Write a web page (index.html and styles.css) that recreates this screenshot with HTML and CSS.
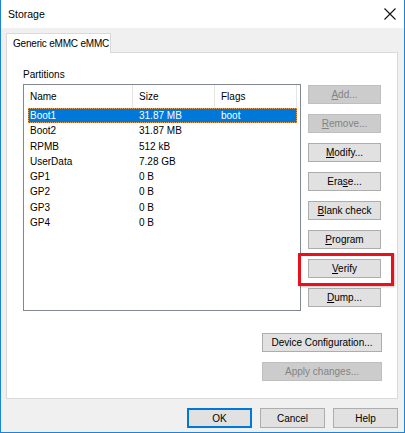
FILE: index.html
```html
<!DOCTYPE html>
<html lang="en">
<head>
    <meta charset="UTF-8">
    <title>Storage</title>
    <link rel="stylesheet" href="styles.css">
</head>
<body>
    <div class="window">
        <div class="titlebar">
            <span class="title">Storage</span>
            <svg class="close" width="12" height="12" viewBox="0 0 12 12">
                <path d="M0.5 0.5 L11.5 11.5 M11.5 0.5 L0.5 11.5" stroke="#111" stroke-width="1.1" fill="none"/>
            </svg>
        </div>

        <div class="content">
            <div class="tabs">
                <div class="tab">Generic eMMC eMMC</div>
            </div>

            <div class="panel">
                <div class="label">Partitions</div>
                <div class="main-row">
                    <div class="list">
                        <div class="list-header">
                            <div class="col col-name">Name</div>
                            <div class="col col-size">Size</div>
                            <div class="col col-flags">Flags</div>
                        </div>
                        <div class="row selected">
                            <div class="col col-name">Boot1</div>
                            <div class="col col-size">31.87 MB</div>
                            <div class="col col-flags">boot</div>
                        </div>
                        <div class="row">
                            <div class="col col-name">Boot2</div>
                            <div class="col col-size">31.87 MB</div>
                            <div class="col col-flags"></div>
                        </div>
                        <div class="row">
                            <div class="col col-name">RPMB</div>
                            <div class="col col-size">512 kB</div>
                            <div class="col col-flags"></div>
                        </div>
                        <div class="row">
                            <div class="col col-name">UserData</div>
                            <div class="col col-size">7.28 GB</div>
                            <div class="col col-flags"></div>
                        </div>
                        <div class="row">
                            <div class="col col-name">GP1</div>
                            <div class="col col-size">0 B</div>
                            <div class="col col-flags"></div>
                        </div>
                        <div class="row">
                            <div class="col col-name">GP2</div>
                            <div class="col col-size">0 B</div>
                            <div class="col col-flags"></div>
                        </div>
                        <div class="row">
                            <div class="col col-name">GP3</div>
                            <div class="col col-size">0 B</div>
                            <div class="col col-flags"></div>
                        </div>
                        <div class="row">
                            <div class="col col-name">GP4</div>
                            <div class="col col-size">0 B</div>
                            <div class="col col-flags"></div>
                        </div>
                    </div>

                    <div class="side-buttons">
                        <button class="btn disabled"><u>A</u>dd...</button>
                        <button class="btn disabled"><u>R</u>emove...</button>
                        <button class="btn"><u>M</u>odify...</button>
                        <button class="btn">Era<u>s</u>e...</button>
                        <button class="btn"><u>B</u>lank check</button>
                        <button class="btn"><u>P</u>rogram</button>
                        <div class="highlight-wrap">
                            <button class="btn"><u>V</u>erify</button>
                            <div class="highlight"></div>
                        </div>
                        <button class="btn"><u>D</u>ump...</button>
                    </div>
                </div>

                <div class="config-buttons">
                    <button class="btn wide">Device Configuration...</button>
                    <button class="btn wide disabled">Apply changes...</button>
                </div>
            </div>

            <div class="footer">
                <button class="btn dialog default">OK</button>
                <button class="btn dialog">Cancel</button>
                <button class="btn dialog">Help</button>
            </div>
        </div>
    </div>
</body>
</html>
```

FILE: styles.css
```css
body {
    margin: 0;
    font-family: 'Liberation Sans', Arial, sans-serif;
    font-size: 10px;
    color: #000;
    background-color: #fff;
}
.window {
    box-sizing: border-box;
    width: 405px;
    height: 433px;
    border: 1px solid #1c84d8;
    border-top: none;
    display: flex;
    flex-direction: column;
}
.titlebar {
    height: 28px;
    background-color: #fff;
    display: flex;
    align-items: center;
    justify-content: space-between;
    padding: 0 8px 0 7px;
    flex-shrink: 0;
}
.title {
    font-size: 10.5px;
}
.content {
    flex: 1;
    background-color: #f0f0f0;
    padding: 5px 6px 0 5px;
    display: flex;
    flex-direction: column;
}
.tabs {
    display: flex;
    height: 19px;
}
.tab {
    box-sizing: border-box;
    width: 105px;
    height: 20px;
    padding: 4px 0 0 6px;
    background-color: #fff;
    border: 1px solid #d9d9d9;
    border-bottom: none;
    white-space: nowrap;
    letter-spacing: -0.2px;
    position: relative;
    z-index: 1;
}
.panel {
    box-sizing: border-box;
    height: 347px;
    background-color: #fff;
    border: 1px solid #d9d9d9;
    padding: 16px 15px 0 16px;
}
.label {
    height: 14px;
    margin-bottom: 1px;
}
.main-row {
    display: flex;
    gap: 7px;
}
.list {
    box-sizing: border-box;
    width: 278px;
    height: 227px;
    border: 1px solid #828790;
    padding-right: 3px;
}
.list-header {
    display: flex;
    height: 23px;
    align-items: center;
}
.list-header .col {
    height: 23px;
    line-height: 23px;
    border-right: 1px solid #e5e5e5;
}
.col {
    box-sizing: border-box;
    padding-left: 6px;
    white-space: nowrap;
}
.col-name {
    width: 109px;
}
.col-size {
    width: 82px;
}
.col-flags {
    width: 82px;
}
.row {
    display: flex;
    height: 15.3px;
    line-height: 15.3px;
    margin-left: 4px;
}
.row .col-name {
    width: 105px;
    padding-left: 2px;
}
.row.selected {
    background-color: #0078d7;
    color: #fff;
    outline: 1px dotted #e9a35d;
    outline-offset: -1px;
}
.side-buttons {
    display: flex;
    flex-direction: column;
    gap: 10px;
    padding-top: 1px;
}
.btn {
    box-sizing: border-box;
    width: 73px;
    height: 19px;
    padding: 0;
    font-family: inherit;
    font-size: 10px;
    color: #000;
    background-color: #e1e1e1;
    border: 1px solid #adadad;
    border-radius: 0;
}
.btn.disabled {
    background-color: #cccccc;
    border-color: #bfbfbf;
    color: #838383;
}
.highlight-wrap {
    position: relative;
}
.highlight {
    position: absolute;
    left: -10px;
    top: -6px;
    width: 96px;
    height: 33px;
    box-sizing: border-box;
    border: 3px solid #e8101a;
    box-shadow: 1px 1px 2px rgba(0, 0, 0, 0.25);
}
.config-buttons {
    display: flex;
    flex-direction: column;
    align-items: flex-end;
    gap: 10px;
    margin-top: 22px;
}
.btn.wide {
    width: 120px;
}
.footer {
    display: flex;
    justify-content: flex-end;
    gap: 8px;
    padding-top: 9px;
}
.btn.dialog {
    width: 65px;
    height: 20px;
}
.btn.default {
    border: 2px solid #0078d7;
}
```
